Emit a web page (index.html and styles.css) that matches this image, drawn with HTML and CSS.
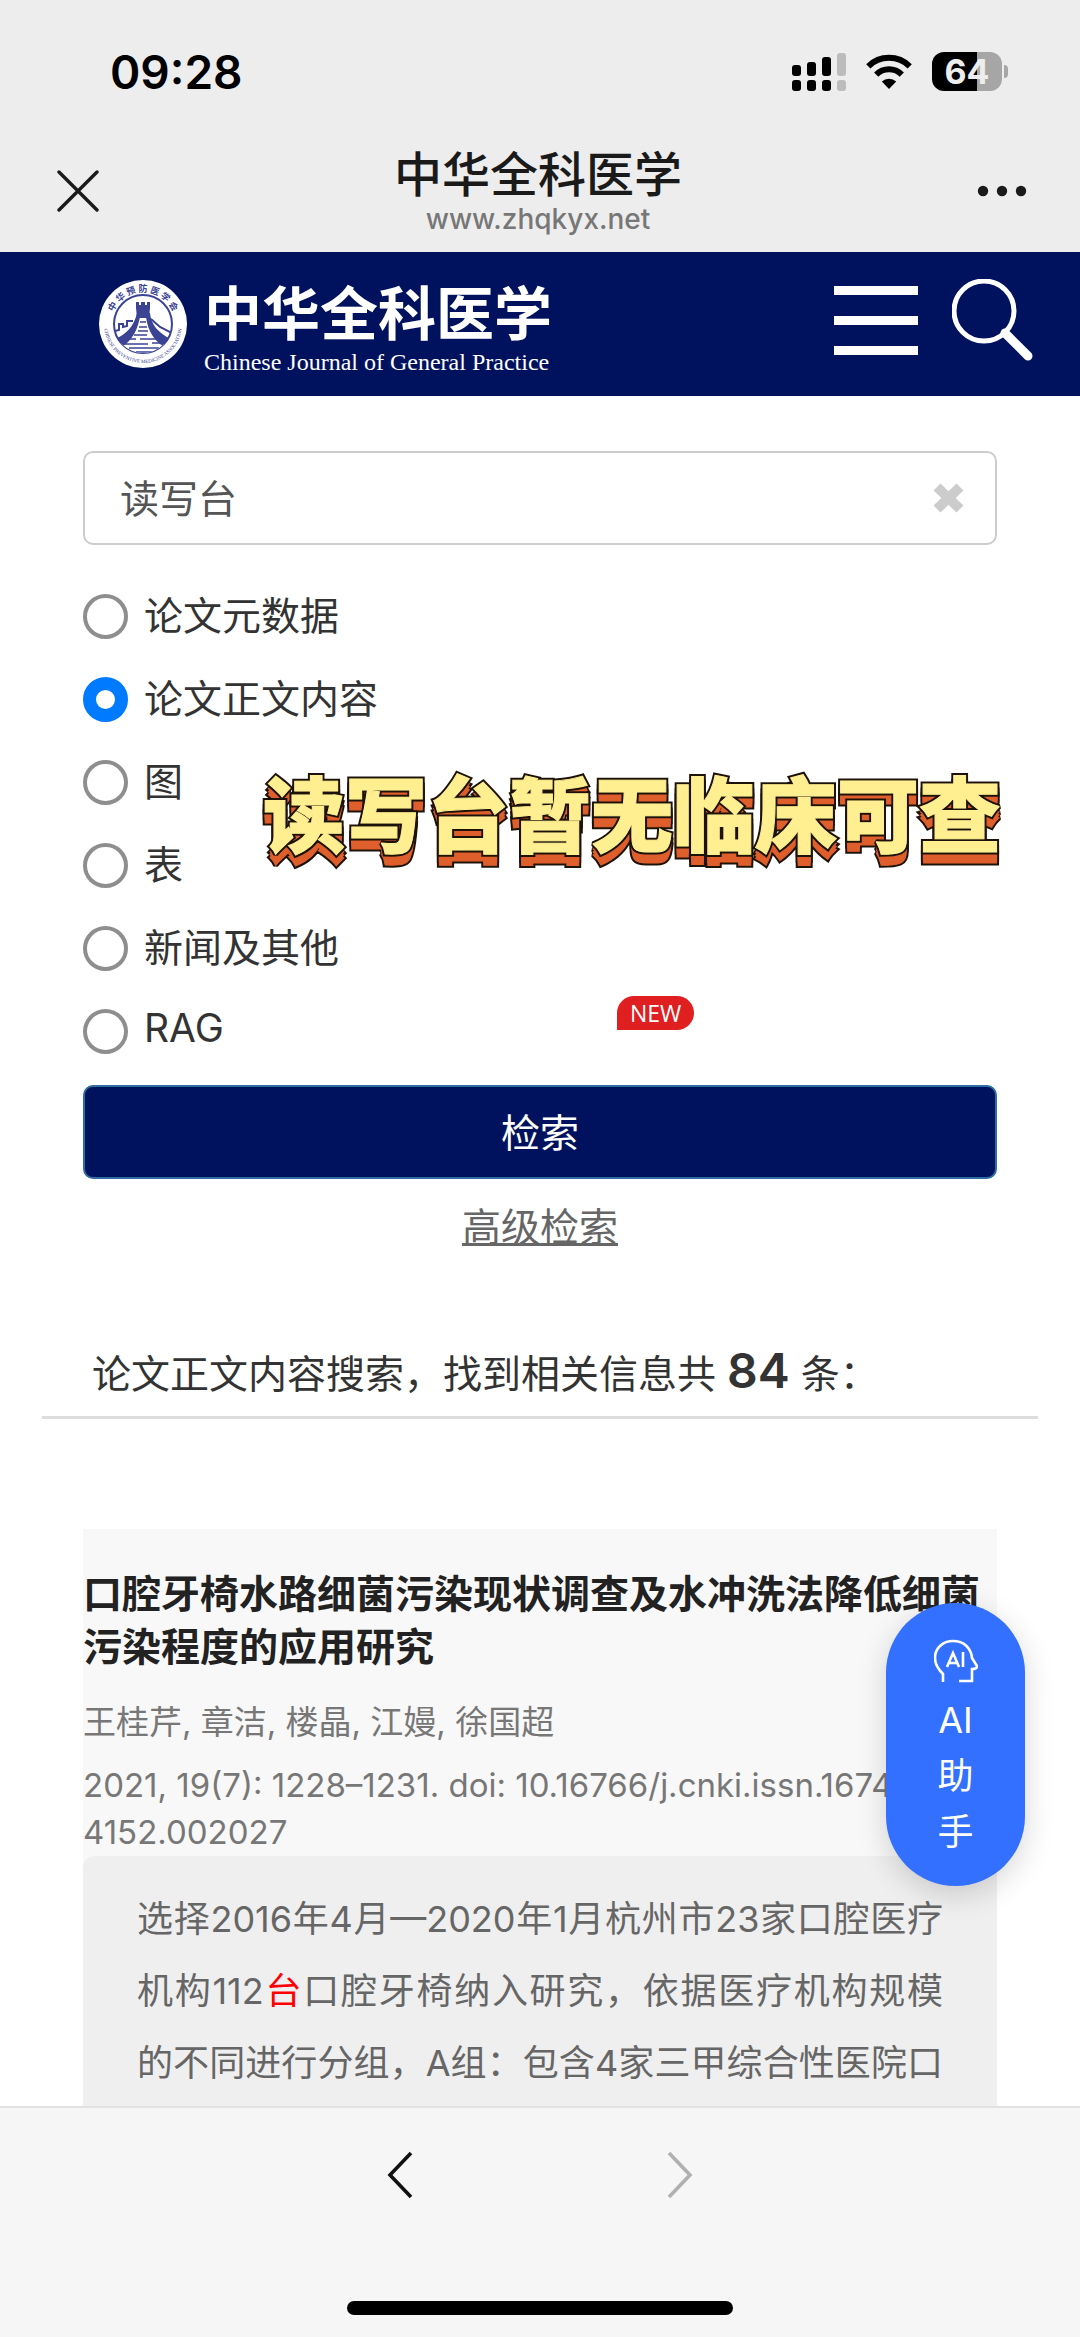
FILE: index.html
```html
<!DOCTYPE html>
<html lang="zh-CN">
<head>
    <meta charset="UTF-8">
    <meta name="viewport" content="width=device-width, initial-scale=1.0">
    <title>中华全科医学</title>
    <link rel="stylesheet" href="styles.css">
</head>
<body>

<header class="app-bar">
    <div class="status-bar">
        <span class="clock">09:28</span>
        <div class="status-icons">
            <svg class="signal" width="54" height="38" viewBox="0 0 54 38">
                <g fill="#000">
                    <rect x="0" y="12" width="9" height="11" rx="3"/>
                    <rect x="15" y="9" width="9" height="14" rx="3"/>
                    <rect x="30" y="4" width="9" height="19" rx="3"/>
                    <rect x="0" y="27" width="9" height="11" rx="3"/>
                    <rect x="15" y="27" width="9" height="11" rx="3"/>
                    <rect x="30" y="27" width="9" height="11" rx="3"/>
                </g>
                <g fill="#bcbcbc">
                    <rect x="45" y="0" width="9" height="23" rx="3"/>
                    <rect x="45" y="27" width="9" height="11" rx="3"/>
                </g>
            </svg>
            <svg class="wifi" width="46" height="35" viewBox="0 0 46 35">
                <g fill="none" stroke="#000" stroke-width="6">
                    <path d="M2.3 12.3A29.5 29.5 0 0 1 43.7 12.3"/>
                    <path d="M10.2 20.6A18.2 18.2 0 0 1 35.8 20.6"/>
                </g>
                <path fill="#000" d="M23 35L15.8 27.6A10.4 10.4 0 0 1 30.2 27.6Z"/>
            </svg>
            <div class="battery"><span>64</span></div>
        </div>
    </div>
    <div class="title-bar">
        <button class="icon-btn" aria-label="关闭">
            <svg width="42" height="42" viewBox="0 0 42 42"><path d="M2 2L40 40M40 2L2 40" fill="none" stroke="#1a1a1a" stroke-width="3.4" stroke-linecap="round"/></svg>
        </button>
        <div class="page-name">
            <h1>中华全科医学</h1>
            <p>www.zhqkyx.net</p>
        </div>
        <button class="icon-btn" aria-label="更多">
            <svg width="50" height="12" viewBox="0 0 50 12" fill="#1a1a1a"><circle cx="6" cy="6" r="5.2"/><circle cx="25" cy="6" r="5.2"/><circle cx="44" cy="6" r="5.2"/></svg>
        </button>
    </div>
</header>

<nav class="banner">
    <a class="brand" href="#">
        <svg class="emblem" width="90" height="90" viewBox="0 0 90 90">
            <defs>
                <path id="ring-top" d="M13 45A32 32 0 0 1 77 45"/>
                <path id="ring-bottom" d="M6 45A39 39 0 0 0 84 45"/>
                <clipPath id="disc"><circle cx="45" cy="45" r="29"/></clipPath>
            </defs>
            <circle cx="45" cy="45" r="44" fill="#fff"/>
            <circle cx="45" cy="45" r="29" fill="#fff" stroke="#3b4395" stroke-width="2"/>
            <g clip-path="url(#disc)">
                <path fill="#3b4395" d="M39 34h13c1 12 9 21 23 27v5H59L50 37h-9L32 66H14v-5c13-4 22-13 25-27z"/>
                <path fill="#fff" d="M42 37h7l3 12 7 11 12 8-6 8H25l-7-8 13-8 8-11z"/>
                <path fill="#3b4395" d="M38 23h3v3h2v-3h4v3h2v-3h3v6l-1 10H39l-1-10z"/>
                <path fill="#3b4395" d="M39 38C37 50 29 57 15 61V67H25C33 62 39 53 42 38ZM51 38C53 50 61 57 75 61V67H65C57 62 50 53 48 38Z"/>
                <path d="M42 43h6M41 48h8M40 52h10M36 56h13M42 60h16M31 60h7M26 65h24M54 64h10M31 69h30M38 73h16" stroke="#3b4395" stroke-width="1.6"/>
                <path d="M17 52l4-1v-6l4 0v3l4-1v-5l6 0M53 40l9 8 12 6" fill="none" stroke="#3b4395" stroke-width="2"/>
            </g>
            <text class="ring-cn"><textPath href="#ring-top" startOffset="50%" text-anchor="middle">中 华 预 防 医 学 会</textPath></text>
            <text class="ring-en"><textPath href="#ring-bottom" startOffset="50%" text-anchor="middle">CHINESE PREVENTIVE MEDICINE ASSOCIATION</textPath></text>
        </svg>
        <span class="brand-text">
            <span class="brand-cn">中华全科医学</span>
            <span class="brand-en">Chinese Journal of General Practice</span>
        </span>
    </a>
    <div class="banner-tools">
        <button class="menu-btn" aria-label="菜单"><i></i><i></i><i></i></button>
        <button class="icon-btn" aria-label="搜索">
            <svg width="82" height="82" viewBox="0 0 82 82" fill="none" stroke="#fff">
                <circle cx="32" cy="32" r="30" stroke-width="5"/>
                <path d="M53 54L76 77" stroke-width="9" stroke-linecap="round"/>
            </svg>
        </button>
    </div>
</nav>

<main class="content">
    <form class="search-form">
        <div class="search-box">
            <input type="text" aria-label="检索词" value="读写台">
            <button type="reset" class="clear-btn" aria-label="清除">
                <svg width="33" height="32" viewBox="0 0 33 32"><path d="M5 5L28 27M28 5L5 27" stroke="#ccc" stroke-width="10"/></svg>
            </button>
        </div>

        <div class="options">
            <label><input type="radio" name="field"><span>论文元数据</span></label>
            <label><input type="radio" name="field" checked><span>论文正文内容</span></label>
            <label><input type="radio" name="field"><span>图</span></label>
            <label><input type="radio" name="field"><span>表</span></label>
            <label><input type="radio" name="field"><span>新闻及其他</span></label>
            <label><input type="radio" name="field"><span>RAG</span></label>
            <span class="new-tag">NEW</span>

            <!-- caption sticker, stacked copies make the 3d edge -->
            <svg class="sticker" width="760" height="120" viewBox="0 0 760 120">
                <defs>
                    <text id="cap" x="9" y="83">读写台暂无临床可查</text>
                </defs>
                <use href="#cap" y="11" class="edge"/>
                <use href="#cap" y="6" class="edge"/>
                <use href="#cap" y="11" class="side"/>
                <use href="#cap" y="8" class="side"/>
                <use href="#cap" y="5" class="side"/>
                <use href="#cap" class="edge"/>
                <use href="#cap" class="face"/>
            </svg>
        </div>

        <button type="button" class="submit-btn">检索</button>
        <a class="advanced" href="#">高级检索</a>
    </form>

    <h2 class="summary">论文正文内容搜索，找到相关信息共 <strong>84</strong> 条：</h2>

    <article class="result">
        <h3>口腔牙椅水路细菌污染现状调查及水冲洗法降低细菌污染程度的应用研究</h3>
        <p class="authors">王桂芹, 章洁, 楼晶, 江嫚, 徐国超</p>
        <p class="source">2021, 19(7): 1228–1231. doi: 10.16766/j.cnki.issn.1674-4152.002027</p>
        <p class="excerpt">选择2016年4月—2020年1月杭州市23家口腔医疗机构112<em>台</em>口腔牙椅纳入研究，依据医疗机构规模的不同进行分组，A组：包含4家三甲综合性医院口</p>
    </article>
</main>

<button class="assistant">
    <svg width="44" height="44" viewBox="0 0 44 44" fill="none" stroke="#fff" stroke-width="2.6">
        <path d="M9 43V35C4 30 1 25 1 19C1 9 9 2 19 2C30 2 37 9 38 19L43 27C43 29 41 30 38 30V42H25"/>
        <path d="M13 28L19 14L25 28M15 24H23M29 13V28"/>
    </svg>
    <span>AI</span>
    <span>助</span>
    <span>手</span>
</button>

<footer class="toolbar">
    <div class="history">
        <button class="icon-btn" aria-label="后退">
            <svg width="28" height="50" viewBox="0 0 28 50"><path d="M25 3L4 25L25 47" fill="none" stroke="#111" stroke-width="3.6"/></svg>
        </button>
        <button class="icon-btn" aria-label="前进">
            <svg width="28" height="50" viewBox="0 0 28 50"><path d="M3 3L24 25L3 47" fill="none" stroke="#b0b0b0" stroke-width="3.6"/></svg>
        </button>
    </div>
    <div class="home-indicator"></div>
</footer>

</body>
</html>
```

FILE: styles.css
```css
* {
    box-sizing: border-box;
}

body {
    margin: 0;
    height: 100vh;
    display: flex;
    flex-direction: column;
    position: relative;
    overflow: hidden;
    background-color: #fff;
    color: #333;
    font-family: Inter, "Noto Sans CJK SC", sans-serif;
    font-size: 39px;
}

h1, h2, h3, p {
    margin: 0;
    font-weight: normal;
}

button {
    margin: 0;
    padding: 0;
    border: none;
    background: none;
    font-family: inherit;
    cursor: pointer;
}

svg {
    display: block;
}

/* Phone status and title */
.app-bar {
    flex: none;
    height: 252px;
    background-color: #ededed;
}

.status-bar {
    display: flex;
    justify-content: space-between;
    align-items: center;
    height: 143px;
    padding: 0 72px 0 110px;
}

.clock {
    color: #000;
    font-size: 46px;
    font-weight: 600;
}

.status-icons {
    display: flex;
    align-items: center;
    gap: 20px;
}

.battery {
    position: relative;
    width: 70px;
    height: 39px;
    margin-right: 6px;
    border-radius: 12px;
    background: linear-gradient(to right, #000 64%, #a6a6a6 64%);
    color: #ededed;
    font-size: 34px;
    font-weight: 700;
    line-height: 39px;
    text-align: center;
}

.battery::after {
    content: "";
    position: absolute;
    right: -6px;
    top: 13px;
    width: 4px;
    height: 13px;
    border-radius: 0 6px 6px 0;
    background-color: #a6a6a6;
}

.title-bar {
    display: flex;
    justify-content: space-between;
    align-items: center;
    height: 96px;
    padding: 0 53px 0 57px;
}

.page-name {
    text-align: center;
}

.page-name h1 {
    color: #1a1a1a;
    font-size: 48px;
    font-weight: 500;
    line-height: 56px;
}

.page-name p {
    color: #777;
    font-size: 28px;
    font-weight: 500;
    line-height: 32px;
}

/* Journal banner */
.banner {
    flex: none;
    display: flex;
    justify-content: space-between;
    align-items: center;
    height: 144px;
    padding: 0 46px 0 98px;
    background-color: #00125e;
}

.brand {
    display: flex;
    align-items: center;
    gap: 16px;
    color: #fff;
    text-decoration: none;
}

.ring-cn {
    fill: #3b4395;
    font-size: 9px;
    font-weight: 700;
}

.ring-en {
    fill: #3b4395;
    font-family: "Liberation Serif", serif;
    font-size: 5px;
}

.brand-text {
    display: flex;
    flex-direction: column;
    padding-top: 8px;
}

.brand-cn {
    font-size: 58px;
    font-weight: 700;
    line-height: 68px;
}

.brand-en {
    font-family: "Liberation Serif", serif;
    font-size: 24px;
    line-height: 28px;
}

.banner-tools {
    display: flex;
    align-items: center;
    gap: 34px;
    padding-bottom: 8px;
}

.menu-btn {
    display: flex;
    flex-direction: column;
    gap: 21px;
    width: 84px;
}

.menu-btn i {
    height: 9px;
    background-color: #fff;
}

/* Search form */
.content {
    flex: 1;
    min-height: 0;
    overflow: hidden;
    padding: 55px 42px 0;
}

.search-form {
    padding: 0 41px;
}

.search-box {
    display: flex;
    align-items: center;
    height: 94px;
    padding: 0 30px 0 35px;
    border: 2px solid #ccc;
    border-radius: 10px;
}

.search-box input {
    flex: 1;
    min-width: 0;
    padding: 0 0 4px;
    border: none;
    outline: none;
    color: #555;
    font-family: inherit;
    font-size: 39px;
}

.options {
    position: relative;
    margin-top: 30px;
}

.options label {
    display: flex;
    align-items: center;
    gap: 16px;
    height: 83px;
}

.options label span {
    padding-bottom: 8px;
}

.options input {
    appearance: none;
    width: 45px;
    height: 45px;
    margin: 0;
    border: 4px solid #8e8e8e;
    border-radius: 50%;
    background-color: #fff;
}

.options input:checked {
    border: 13px solid #007aff;
}

.new-tag {
    position: absolute;
    left: 534px;
    bottom: 43px;
    padding: 0 13px;
    border-radius: 17px 17px 17px 0;
    background-color: #e02020;
    color: #fff;
    font-family: "Open Sans", sans-serif;
    font-size: 23px;
    line-height: 34px;
}

.sticker {
    position: absolute;
    right: -17px;
    top: 188px;
    font-family: "Noto Sans CJK SC", sans-serif;
    font-size: 82px;
    font-weight: 900;
    stroke-linejoin: miter;
    stroke-miterlimit: 2;
}

.edge {
    fill: #1c1208;
    stroke: #1c1208;
    stroke-width: 5;
}

.side {
    fill: #de5f2c;
    stroke: #de5f2c;
    stroke-width: 1;
}

.face {
    fill: #ffef91;
    stroke: #ffef91;
    stroke-width: 1;
}

.submit-btn {
    display: block;
    width: 100%;
    height: 94px;
    margin-top: 12px;
    padding-bottom: 4px;
    border: 2px solid #2e6da4;
    border-radius: 10px;
    background-color: #00125e;
    color: #fff;
    font-size: 39px;
}

.advanced {
    display: block;
    margin-top: 20px;
    color: #666;
    line-height: 56px;
    text-align: center;
}

/* Results */
.summary {
    margin-top: 80px;
    padding: 0 50px 6px;
    border-bottom: 3px solid #ddd;
    font-size: 39px;
    line-height: 72px;
}

.summary strong {
    font-size: 48px;
    font-weight: 600;
}

.result {
    margin: 110px 41px 0;
    padding-top: 38px;
    background-color: #f8f8f8;
}

.result h3 {
    color: #222;
    font-size: 39px;
    font-weight: 700;
    line-height: 53px;
}

.authors, .source {
    color: #777;
    font-size: 33px;
    line-height: 47px;
}

.authors {
    margin-top: 26px;
}

.source {
    margin-top: 16px;
}

.excerpt {
    padding: 27px 54px;
    border-radius: 12px;
    background-color: #efefef;
    color: #666;
    font-size: 36px;
    line-height: 72px;
    text-align: justify;
    text-align-last: justify;
}

.excerpt em {
    color: #f00;
    font-style: normal;
}

/* Floating assistant button */
.assistant {
    position: absolute;
    right: 55px;
    bottom: 451px;
    display: flex;
    flex-direction: column;
    align-items: center;
    width: 139px;
    padding: 36px 0 26px;
    border-radius: 70px;
    background-color: #3370ff;
    box-shadow: 0 8px 30px rgba(0, 0, 0, 0.16);
    color: #fff;
    font-size: 36px;
    line-height: 56px;
}

.assistant svg {
    margin-bottom: 9px;
}

/* Bottom toolbar */
.toolbar {
    flex: none;
    display: flex;
    flex-direction: column;
    align-items: center;
    justify-content: space-between;
    height: 231px;
    padding: 42px 0 22px;
    border-top: 2px solid #e2e2e2;
    background-color: #f6f6f6;
}

.history {
    display: flex;
    gap: 252px;
}

.home-indicator {
    width: 386px;
    height: 14px;
    border-radius: 7px;
    background-color: #000;
}
```
